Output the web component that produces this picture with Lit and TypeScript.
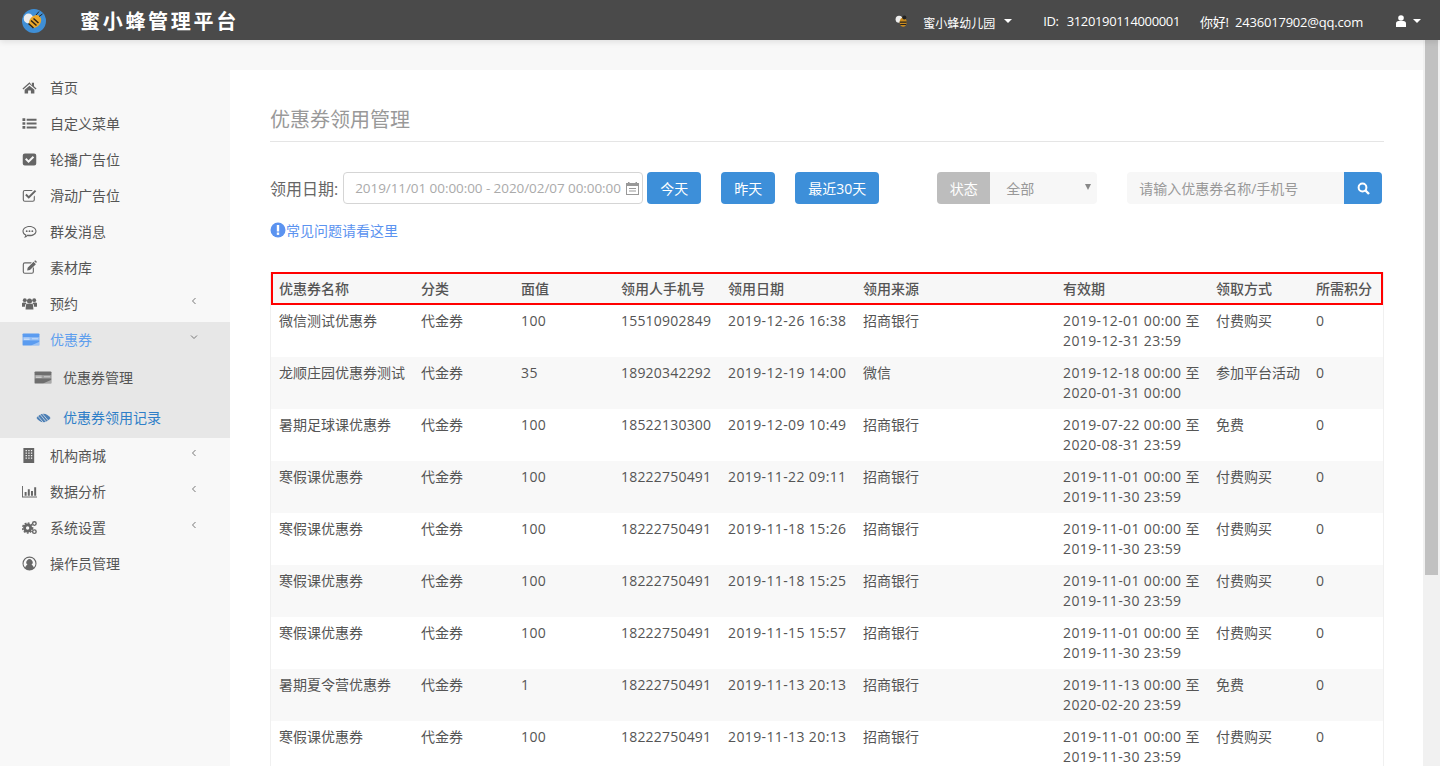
import { LitElement, html, css, svg } from 'lit';
import { customElement } from 'lit/decorators.js';

const fa = (d: unknown, box = '0 0 16 16') =>
  html`<svg class="ico" viewBox=${box} aria-hidden="true">${d}</svg>`;

const discover = (c: string) => svg`
  <rect x="0" y="1.500" width="18" height="13" rx="1" fill=${c}/>
  <rect x="0" y="5.500" width="18" height="3.500" fill="#fff" opacity=".35"/>
  <path d="M1.500 6.500h6M1.500 8h6M10 7.200h6.500" stroke="#fff" stroke-width=".7" opacity=".7"/>
  <path d="M9 14.500 18 10.500v3a1 1 0 0 1-1 1z" fill="#fff" opacity=".4"/>`;

const icons: Record<string, unknown> = {
  home: svg`<path d="M8 2.500 0.500 9l.9 1L8 4.300l6.600 5.700.9-1-2.700-2.300V3h-2.300v2.500zM2.800 10.500V14.500h3.700v-3.300h3v3.300h3.700v-4L8 6z" fill="currentColor"/>`,
  list: svg`<path d="M.5 2.500h3v2.800h-3zM.5 6.600h3v2.800h-3zM.5 10.700h3v2.800h-3zM5 2.900h10.500v2.100H5zM5 7h10.500v2.100H5zM5 11.100h10.500v2.100H5z" fill="currentColor"/>`,
  checkFill: svg`<path fill-rule="evenodd" d="M3 1.500h10a2.200 2.200 0 0 1 2.200 2.200v8.600a2.200 2.200 0 0 1-2.200 2.200H3a2.200 2.200 0 0 1-2.200-2.200V3.700A2.200 2.200 0 0 1 3 1.500zm4 10.300 6-6-1.500-1.500L7 8.800 4.700 6.500 3.200 8z" fill="currentColor"/>`,
  checkLine: svg`<path d="M3 2h8.500l-1.200 1.200H3a1 1 0 0 0-1 1v8.300a1 1 0 0 0 1 1h8.500a1 1 0 0 0 1-1V9.200l1.200-1.200v4.500a2.200 2.200 0 0 1-2.200 2.200H3a2.200 2.200 0 0 1-2.200-2.200V4.200A2.200 2.200 0 0 1 3 2z" fill="currentColor"/><path d="m7.200 11.500-3.800-3.800 1.500-1.500 2.300 2.300 6.500-6.500 1.500 1.500z" fill="currentColor"/>`,
  chat: svg`<path fill-rule="evenodd" d="M8 2c4.100 0 7.500 2.500 7.500 5.600S12.100 13 8 13c-.7 0-1.300-.1-1.900-.2-.9.900-2.300 1.700-4 1.800.8-.8 1.300-1.700 1.400-2.500C1.700 11.100.5 9.500.5 7.600.5 4.500 3.900 2 8 2zm0 1.200C4.600 3.200 1.700 5.100 1.700 7.600c0 1.600 1.100 2.900 2.900 3.700 0 .4-.1.800-.2 1.200.6-.3 1.200-.8 1.700-1.300.6.200 1.200.3 1.900.3 3.400 0 6.300-1.600 6.300-3.900S11.400 3.200 8 3.200z" fill="currentColor"/><circle cx="5" cy="7.600" r="1" fill="currentColor"/><circle cx="8" cy="7.600" r="1" fill="currentColor"/><circle cx="11" cy="7.600" r="1" fill="currentColor"/>`,
  edit: svg`<path d="M3 2.500h7.500l-1.200 1.200H3a1 1 0 0 0-1 1V12.500a1 1 0 0 0 1 1h7.500a1 1 0 0 0 1-1V8.700l1.200-1.200v5a2.200 2.200 0 0 1-2.200 2.200H3a2.200 2.200 0 0 1-2.200-2.200V4.700A2.200 2.200 0 0 1 3 2.500z" fill="currentColor"/><path d="M6 8.200 12.300 1.900 14.800 4.400 8.500 10.700 5.500 11.200zM13 1.200l.7-.6a.7.700 0 0 1 .9 0l1 1a.7.700 0 0 1 0 .9l-.6.800z" fill="currentColor"/>`,
  users: svg`<circle cx="8" cy="5.400" r="2.700" fill="currentColor"/><circle cx="3" cy="4.400" r="2.100" fill="currentColor"/><circle cx="13" cy="4.400" r="2.100" fill="currentColor"/><path d="M4.200 9.500a1.500 1.500 0 0 1 1.500-1.300h4.600a1.500 1.500 0 0 1 1.500 1.300l.4 5H3.800zM0 7.800C.3 7.100.9 6.900 1.500 6.900h2.400c.3.500.8 1 1.300 1.200-1.200.3-1.900 1-2 2.200l-.1 1.200H0zM16 7.800c-.3-.7-.9-.9-1.500-.9h-2.400c-.3.500-.8 1-1.300 1.200 1.200.3 1.900 1 2 2.200l.1 1.200H16z" fill="currentColor"/>`,
  building: svg`<path fill-rule="evenodd" d="M1.500 0h11.500v16H1.500zM3.800 2v1.400h1.400V2zm2.900 0v1.400h1.400V2zm2.800 0v1.400h1.400V2zM3.800 4.700v1.400h1.400V4.700zm2.900 0v1.400h1.400V4.700zm2.800 0v1.400h1.400V4.700zM3.800 7.400v1.400h1.400V7.400zm2.900 0v1.400h1.400V7.400zm2.800 0v1.400h1.400V7.400zM3.800 10.100v1.400h1.400v-1.400zm2.900 0v1.400h1.400v-1.400zm2.800 0v1.400h1.400v-1.400z" fill="currentColor"/>`,
  chart: svg`<path d="M0 2h1v11.400h15v1.100H0zM2.800 8.500h2.100v4H2.800zM6.200 5.700h2.100v6.800H6.200zM9.600 7.500h2.100v5H9.600zM13 3.500h2.100v9H13z" fill="currentColor"/>`,
  cogs: svg`<circle cx="6" cy="8.500" r="3.300" fill="none" stroke="currentColor" stroke-width="3"/><circle cx="6" cy="8.500" r="5.300" fill="none" stroke="currentColor" stroke-width="1.600" stroke-dasharray="2 1.500"/><circle cx="13.200" cy="3.800" r="1.900" fill="none" stroke="currentColor" stroke-width="1.500"/><circle cx="13.200" cy="12.400" r="1.900" fill="none" stroke="currentColor" stroke-width="1.500"/>`,
  userCircle: svg`<path fill-rule="evenodd" d="M8 .500a7.500 7.500 0 1 1 0 15A7.500 7.500 0 0 1 8 .500zm0 1.300a6.200 6.200 0 0 0-4.600 10.400c.5-1.600 1.500-2.600 2.500-2.900a3.300 3.300 0 1 1 4.200 0c1 .3 2 1.300 2.500 2.900A6.200 6.200 0 0 0 8 1.800z" fill="currentColor"/>`,
  eyeSlash: svg`<path d="M.5 8.500C2.500 5.700 5 4 8 4s5.500 1.700 7.500 4.500C13.500 11.300 11 13 8 13S2.500 11.300.5 8.500z" fill="currentColor"/><path d="M3 3 11.500 13.500M5.500 2.500 13.500 12M1.500 6 8 13.500" stroke="#e7e7e7" stroke-width=".8" fill="none"/>`,
  cardBlue: discover('#5b9cf0'),
  cardGrey: discover('#6e6e6e'),
};

type Item = { label: string; icon: string; arrow?: 'left' | 'down'; active?: boolean };

const menuTop: Item[] = [
  { label: '首页', icon: 'home' },
  { label: '自定义菜单', icon: 'list' },
  { label: '轮播广告位', icon: 'checkFill' },
  { label: '滑动广告位', icon: 'checkLine' },
  { label: '群发消息', icon: 'chat' },
  { label: '素材库', icon: 'edit' },
  { label: '预约', icon: 'users', arrow: 'left' },
];
const menuBottom: Item[] = [
  { label: '机构商城', icon: 'building', arrow: 'left' },
  { label: '数据分析', icon: 'chart', arrow: 'left' },
  { label: '系统设置', icon: 'cogs', arrow: 'left' },
  { label: '操作员管理', icon: 'userCircle' },
];

const columns = ['优惠券名称', '分类', '面值', '领用人手机号', '领用日期', '领用来源', '有效期', '领取方式', '所需积分'];

const rows = [
  ['微信测试优惠券', '100', '15510902849', '2019-12-26 16:38', '招商银行', '2019-12-01 00:00', '2019-12-31 23:59', '付费购买'],
  ['龙顺庄园优惠券测试', '35', '18920342292', '2019-12-19 14:00', '微信', '2019-12-18 00:00', '2020-01-31 00:00', '参加平台活动'],
  ['暑期足球课优惠券', '100', '18522130300', '2019-12-09 10:49', '招商银行', '2019-07-22 00:00', '2020-08-31 23:59', '免费'],
  ['寒假课优惠券', '100', '18222750491', '2019-11-22 09:11', '招商银行', '2019-11-01 00:00', '2019-11-30 23:59', '付费购买'],
  ['寒假课优惠券', '100', '18222750491', '2019-11-18 15:26', '招商银行', '2019-11-01 00:00', '2019-11-30 23:59', '付费购买'],
  ['寒假课优惠券', '100', '18222750491', '2019-11-18 15:25', '招商银行', '2019-11-01 00:00', '2019-11-30 23:59', '付费购买'],
  ['寒假课优惠券', '100', '18222750491', '2019-11-15 15:57', '招商银行', '2019-11-01 00:00', '2019-11-30 23:59', '付费购买'],
  ['暑期夏令营优惠券', '1', '18222750491', '2019-11-13 20:13', '招商银行', '2019-11-13 00:00', '2020-02-20 23:59', '免费'],
  ['寒假课优惠券', '100', '18222750491', '2019-11-13 20:13', '招商银行', '2019-11-01 00:00', '2019-11-30 23:59', '付费购买'],
];

@customElement('app-root')
export class AppRoot extends LitElement {
  static styles = css`
    :host {
      display: block;
      height: 766px;
      overflow: hidden;
      position: relative;
      background: #f8f8f8;
      font-family: 'Open Sans', 'Noto Sans CJK SC', sans-serif;
      font-size: 14px;
      color: #555;
    }
    .ico { width: 16px; height: 16px; display: block; }
    .topbar {
      height: 40px;
      background: #4a4a4a;
      color: #fff;
      display: flex;
      align-items: center;
      box-shadow: 0 2px 6px rgba(0, 0, 0, 0.1);
      position: relative;
      z-index: 2;
      font-size: 13px;
    }
    .logo { width: 24px; height: 24px; margin: 2px 0 0 22px; flex: none; }
    .brand {
      margin-left: 34px;
      font-size: 20px;
      font-weight: 700;
      letter-spacing: 2.7px;
      font-family: 'Noto Sans CJK SC', sans-serif;
    }
    .top-right { margin-left: auto; display: flex; align-items: center; padding-top: 2px; }
    .school-logo { width: 14px; height: 14px; margin-right: 14px; }
    .caret {
      width: 0; height: 0;
      border-left: 4px solid transparent;
      border-right: 4px solid transparent;
      border-top: 4px solid #fff;
    }
    .school { display: flex; align-items: center; gap: 9px; margin-right: 31px; font-size: 12px; padding-top: 3px; }
    .school .caret { margin-top: -3px; }
    .id { margin-right: 20px; word-spacing: 5px; letter-spacing: -.35px; }
    .hello { margin-right: 33px; word-spacing: 3px; letter-spacing: -.2px; }
    .user { display: flex; align-items: center; gap: 7px; margin-right: 19px; }
    .user .ico { width: 10px; height: 12px; }
    .body { display: flex; height: 726px; }
    .side { width: 230px; flex: none; padding-top: 30px; color: #555; font-size: 14px; }
    .m {
      height: 36px;
      box-sizing: border-box;
      padding: 0 0 2px 22px;
      display: flex;
      align-items: center;
      position: relative;
    }
    .m .ico { width: 15px; height: 15px; margin-right: 13px; color: #666; flex: none; }
    .arrow { position: absolute; left: 190px; top: 11px; width: 8px; height: 8px; color: #777; }
    .open { background: #e7e7e7; }
    .open .m.head { color: #5f9fee; }
    .open .m.head .ico { width: 18px; margin-right: 10px; }
    .sub {
      height: 40px;
      box-sizing: border-box;
      padding: 0 0 2px 34px;
      display: flex;
      align-items: center;
    }
    .sub .ico { width: 18px; height: 15px; margin-right: 11px; flex: none; }
    .sub.on { color: #2f7fc8; }
    .sub.on .ico { width: 15px; margin-left: 2px; margin-right: 12px; color: #4c7fb5; }
    .main {
      width: 1193px;
      flex: none;
      margin-top: 30px;
      background: #fff;
      padding: 0 39px 0 40px;
      box-sizing: border-box;
    }
    .title {
      height: 72px;
      box-sizing: border-box;
      padding-top: 36px;
      font-size: 20px;
      line-height: 28px;
      color: #999;
      border-bottom: 1px solid #e5e5e5;
    }
    .filters { display: flex; align-items: center; margin-top: 30px; height: 32px; }
    .lbl { font-size: 16px; color: #666; margin-right: 5px; }
    .date {
      width: 300px;
      height: 32px;
      box-sizing: border-box;
      border: 1px solid #d5d5d5;
      border-radius: 4px;
      padding-left: 11px;
      display: flex;
      align-items: center;
      color: #aaa;
      font-size: 13.5px;
      letter-spacing: -.07px;
      white-space: nowrap;
      position: relative;
    }
    .date .cal { position: absolute; right: 2px; top: 8px; width: 15px; height: 15px; color: #999; }
    .btn {
      height: 32px;
      background: #3d8fd9;
      color: #fff;
      border-radius: 4px;
      display: flex;
      align-items: center;
      justify-content: center;
      width: 54px;
      margin-left: 20px;
    }
    .btn.first { margin-left: 4px; }
    .btn.wide { width: 84px; }
    .status { display: flex; margin-left: 58px; width: 160px; height: 32px; background: #f7f7f7; border-radius: 4px; overflow: hidden; }
    .status .k { width: 53px; background: #bdbdbd; color: #fff; display: flex; align-items: center; justify-content: center; }
    .status .v { flex: 1; display: flex; align-items: center; padding-left: 16px; color: #999; position: relative; }
    .status .v::after {
      content: '';
      position: absolute;
      right: 6px; top: 12px;
      border-left: 3.5px solid transparent;
      border-right: 3.5px solid transparent;
      border-top: 6px solid #888;
    }
    .search { display: flex; margin-left: 30px; width: 255px; height: 32px; border-radius: 4px; overflow: hidden; background: #f7f7f7; }
    .search .q { flex: 1; display: flex; align-items: center; padding-left: 12px; color: #999; }
    .search .go { width: 38px; background: #3d8fd9; color: #fff; display: flex; align-items: center; justify-content: center; }
    .search .go .ico { width: 13px; height: 13px; }
    .faq { display: flex; align-items: center; margin-top: 16px; height: 20px; color: #5b93f0; }
    .faq .ico { width: 16px; height: 16px; }
    .table-wrap { margin-top: 32px; border-left: 1px solid #f0f0f0; border-right: 1px solid #f0f0f0; }
    table { border-collapse: separate; border-spacing: 0; width: 100%; table-layout: fixed; font-size: 14px; }
    th, td { text-align: left; vertical-align: top; padding: 0 0 0 8px; font-weight: 400; }
    thead th {
      height: 27px;
      padding-bottom: 2px;
      vertical-align: middle;
      background: #f7f7f7;
      border-top: 2px solid #f00;
      border-bottom: 2px solid #f00;
      font-weight: 500;
      color: #555;
      white-space: nowrap;
    }
    thead th:first-child { border-left: 2px solid #f00; padding-left: 6px; }
    thead th:last-child { border-right: 2px solid #f00; }
    tbody td { height: 52px; box-sizing: border-box; padding-top: 6px; line-height: 20px; white-space: nowrap; }
    tbody tr:nth-child(even) td { background: #f8f8f8; }
    .num { letter-spacing: .2px; }
    .dt { letter-spacing: .38px; }
    .scroll { position: absolute; right: 0; top: 40px; bottom: 0; width: 17px; background: #f1f1f1; }
    .thumb { position: absolute; left: 2px; right: 2px; top: 0; height: 535px; background: #c1c1c1; }
  `;

  private item(m: Item) {
    return html`<div class="m">
      ${fa(icons[m.icon])}<span>${m.label}</span>
      ${m.arrow ? html`<svg class="arrow" viewBox="0 0 8 8"><path d="M5.500 1 2.500 4l3 3" fill="none" stroke="currentColor"/></svg>` : ''}
    </div>`;
  }

  render() {
    return html`
      <div class="topbar">
        <svg class="logo" viewBox="0 0 24 24">
          <circle cx="12" cy="12" r="12" fill="#3f8fd6"/>
          <ellipse cx="6.500" cy="9.500" rx="4.800" ry="5" fill="#ececec"/>
          <ellipse cx="13" cy="12.500" rx="5.500" ry="7" fill="#e9a72b" transform="rotate(40 13 12.500)"/>
          <path d="M6.500 14.500l5 4.500M9 11.500l5.500 5M11.500 9.500l5 4.500" stroke="#2a2118" stroke-width="1.500"/>
          <path d="M14 6l3-3.500M17 7.500l3.500-2.500" stroke="#222" stroke-width="1"/>
        </svg>
        <span class="brand">蜜小蜂管理平台</span>
        <div class="top-right">
          <svg class="school-logo" viewBox="0 0 24 24">
            <ellipse cx="7" cy="9" rx="6" ry="6" fill="#eee"/>
            <ellipse cx="14" cy="14" rx="6" ry="8" fill="#c98a1e"/>
            <path d="M8 14h12M9 18h10" stroke="#222" stroke-width="2"/>
            <circle cx="16" cy="6" r="3.500" fill="#222"/>
          </svg>
          <div class="school"><span>蜜小蜂幼儿园</span><i class="caret"></i></div>
          <span class="id">ID: 3120190114000001</span>
          <span class="hello">你好! 2436017902@qq.com</span>
          <div class="user">
            <svg class="ico" viewBox="0 0 10 12"><circle cx="5" cy="3" r="2.800" fill="#fff"/><path d="M0 12V8.500C0 7 1 6 2.500 6h5C9 6 10 7 10 8.500V12z" fill="#fff"/></svg>
            <i class="caret"></i>
          </div>
        </div>
      </div>
      <div class="body">
        <nav class="side">
          ${menuTop.map((m) => this.item(m))}
          <div class="open">
            <div class="m head">
              <svg class="ico" viewBox="0 0 18 16">${icons.cardBlue}</svg><span>优惠券</span>
              <svg class="arrow" viewBox="0 0 8 8"><path d="M1 2.500l3 3 3-3" fill="none" stroke="currentColor"/></svg>
            </div>
            <div class="sub"><svg class="ico" viewBox="0 0 18 16">${icons.cardGrey}</svg><span>优惠券管理</span></div>
            <div class="sub on">${fa(icons.eyeSlash)}<span>优惠券领用记录</span></div>
          </div>
          ${menuBottom.map((m) => this.item(m))}
        </nav>
        <main class="main">
          <div class="title">优惠券领用管理</div>
          <div class="filters">
            <span class="lbl">领用日期:</span>
            <div class="date">2019/11/01 00:00:00 - 2020/02/07 00:00:00
              <svg class="cal" viewBox="0 0 15 15"><path fill-rule="evenodd" d="M1 2h2V1h1.500v1h6V1H12v1h2v12H1zm1 3v8h11V5z" fill="currentColor"/><path d="M4 7h7v1H4zM4 9.500h7v1H4z" fill="currentColor"/></svg>
            </div>
            <div class="btn first">今天</div>
            <div class="btn">昨天</div>
            <div class="btn wide">最近30天</div>
            <div class="status"><div class="k">状态</div><div class="v">全部</div></div>
            <div class="search">
              <div class="q">请输入优惠券名称/手机号</div>
              <div class="go"><svg class="ico" viewBox="0 0 13 13"><circle cx="5.500" cy="5.500" r="3.900" fill="none" stroke="#fff" stroke-width="2"/><path d="M8.500 8.500 12 12" stroke="#fff" stroke-width="2.400"/></svg></div>
            </div>
          </div>
          <div class="faq">
            <svg class="ico" viewBox="0 0 16 16"><circle cx="8" cy="8" r="7.500" fill="#5b93f0"/><rect x="6.800" y="3" width="2.400" height="6.500" fill="#fff"/><rect x="6.800" y="10.500" width="2.400" height="2.400" fill="#fff"/></svg>
            <span>常见问题请看这里</span>
          </div>
          <div class="table-wrap">
            <table>
              <colgroup>
                <col style="width:142px" /><col style="width:100px" /><col style="width:100px" /><col style="width:107px" />
                <col style="width:135px" /><col style="width:200px" /><col style="width:153px" /><col style="width:100px" /><col />
              </colgroup>
              <thead><tr>${columns.map((c) => html`<th>${c}</th>`)}</tr></thead>
              <tbody>
                ${rows.map(
                  (r) => html`<tr>
                    <td>${r[0]}</td><td>代金券</td><td class="dt">${r[1]}</td><td class="num">${r[2]}</td><td class="dt">${r[3]}</td><td>${r[4]}</td>
                    <td class="dt">${r[5]} 至<br />${r[6]}</td><td>${r[7]}</td><td>0</td>
                  </tr>`
                )}
              </tbody>
            </table>
          </div>
        </main>
      </div>
      <div class="scroll"><div class="thumb"></div></div>
    `;
  }
}
